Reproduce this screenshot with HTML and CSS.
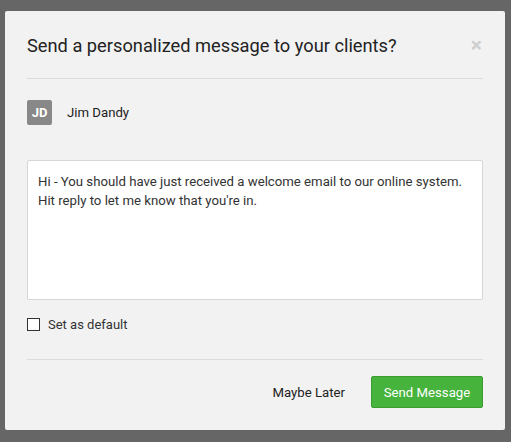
FILE: index.html
```html
<!DOCTYPE html>
<html>
	<head>
		<meta charset="utf-8" />
		<title>Send message</title>
		<link rel="stylesheet" href="styles.css">
	</head>
	<body>
		<div class="backdrop">
			<div class="modal">
				<div class="modal_head">
					<h2>Send a personalized message to your clients?</h2>
					<span class="close">&times;</span>
				</div>
				<div class="modal_body">
					<div class="client">
						<span class="avatar">JD</span>
						<span class="name">Jim Dandy</span>
					</div>
					<div class="message">Hi - You should have just received a welcome email to our online system. Hit reply to let me know that you're in.</div>
					<label class="check"><span class="box"></span>Set as default</label>
				</div>
				<div class="modal_foot">
					<button class="later">Maybe Later</button>
					<button class="send">Send Message</button>
				</div>
			</div>
		</div>
	</body>
</html>
```

FILE: styles.css
```css
*{
	margin:0;
	padding:0;
	box-sizing: border-box;
}
body{
	background:#666;
	font-family: Roboto, "Liberation Sans", sans-serif;
	color:#222;
}
.backdrop{
	padding: 11px 0 0 5px;
	height: 442px;
}
.modal{
	width: 500px;
	height: 419px;
	background: #f2f2f2;
	border-radius: 2px;
	padding: 0 22px;
	display: flex;
	flex-direction: column;
}
.modal_head{
	display: flex;
	justify-content: space-between;
	align-items: flex-start;
	padding: 23px 0 21px;
	border-bottom: 1px solid #ddd;
}
	.modal_head h2{
		font-size: 18.25px;
		font-weight: normal;
		line-height: 23px;
		color:#222;
	}
	.close{
		font-size: 21px;
		font-weight: bold;
		line-height: 20px;
		color:#cfcfcf;
		margin: 1px 1px 0 0;
	}
.modal_body{
	padding-top: 21px;
	border-bottom: 1px solid #ddd;
	padding-bottom: 28px;
}
.client{
	display: flex;
	align-items: center;
	gap: 15px;
	height: 25px;
}
	.avatar{
		width: 25px;
		height: 25px;
		background:#888;
		color:#fff;
		border-radius: 2px;
		font-size: 13px;
		font-weight: bold;
		display: flex;
		align-items: center;
		justify-content: center;
	}
	.name{
		font-size: 13.2px;
		color:#222;
	}
.message{
	margin-top: 35px;
	height: 140px;
	background:#fff;
	border: 1px solid #d6d6d6;
	border-radius: 2px;
	padding: 11px 10px;
	font-size: 13.2px;
	line-height: 19px;
	color:#333;
}
.check{
	display: flex;
	align-items: center;
	gap: 8px;
	margin-top: 17px;
	font-size: 13px;
	color:#333;
	height: 14px;
}
	.box{
		width: 13px;
		height: 13px;
		border: 1px solid #333;
		background:#fff;
	}
.modal_foot{
	display: flex;
	justify-content: flex-end;
	align-items: center;
	padding-top: 16px;
	gap: 14px;
}
	.modal_foot button{
		font-family: Roboto, "Liberation Sans", sans-serif;
		font-size: 13.2px;
		height: 32px;
		border-radius: 2px;
		cursor: pointer;
	}
	.later{
		background: none;
		border: none;
		color:#222;
		padding: 0 12px;
	}
	.send{
		width: 112px;
		background:#46b33c;
		border: 1px solid #3a9c31;
		color:#fff;
	}
```
